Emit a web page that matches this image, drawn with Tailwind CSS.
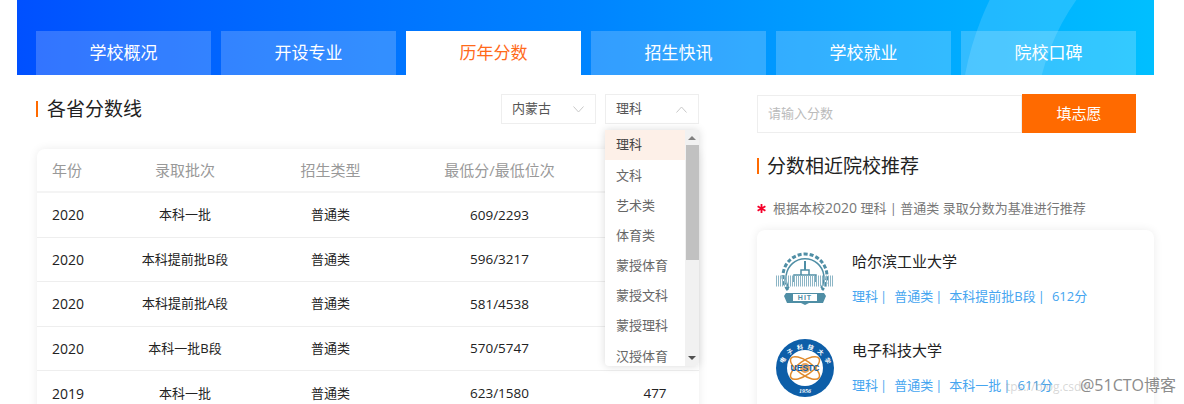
<!DOCTYPE html>
<html lang="zh-CN">
<head>
    <meta charset="UTF-8">
    <title>历年分数</title>
    <script src="https://cdn.jsdelivr.net/npm/@tailwindcss/browser@4"></script>
</head>
<body class="bg-white h-[404px] overflow-hidden relative font-['Open_Sans','Noto_Sans_CJK_SC',sans-serif] text-[#222]">
    <!-- tab header -->
    <header class="relative ml-[17px] w-[1137px] h-[75px] overflow-hidden bg-gradient-to-r from-[#0050ff] via-[#0084ff] to-[#00bfff]">
        <div class="absolute left-[943px] top-[-170px] w-[600px] h-[600px] rounded-full border-[75px] border-white/[0.13]"></div>
        <nav class="relative flex gap-[10px] pl-[19px] pt-[31px]">
            <a class="w-[175px] h-[44px] bg-white/20 text-white text-[17px] flex items-center justify-center">学校概况</a>
            <a class="w-[175px] h-[44px] bg-white/20 text-white text-[17px] flex items-center justify-center">开设专业</a>
            <a class="w-[175px] h-[44px] bg-white text-[#ff6a1a] text-[17px] flex items-center justify-center">历年分数</a>
            <a class="w-[175px] h-[44px] bg-white/20 text-white text-[17px] flex items-center justify-center">招生快讯</a>
            <a class="w-[175px] h-[44px] bg-white/20 text-white text-[17px] flex items-center justify-center">学校就业</a>
            <a class="w-[175px] h-[44px] bg-white/20 text-white text-[17px] flex items-center justify-center">院校口碑</a>
        </nav>
    </header>

    <main class="flex pl-[36px] h-[329px] overflow-hidden">
        <!-- left column -->
        <section class="w-[664px] relative">
            <div class="flex items-center h-[30px] mt-[19px]">
                <span class="w-[2px] h-[16px] bg-[#ff6a00]"></span>
                <h2 class="ml-[9px] text-[19px] leading-none">各省分数线</h2>
                <div class="ml-auto w-[95px] h-[30px] border border-[#eeeeee] flex items-center justify-between pl-[10px] pr-[11px] text-[13px] text-[#555]">
                    内蒙古
                    <svg width="11" height="7" viewBox="0 0 11 7" fill="none" stroke="#c8c8c8"><path d="M.5.5l5 5.5 5-5.5"/></svg>
                </div>
                <div class="ml-[9px] mr-px w-[94px] h-[30px] border border-[#eeeeee] flex items-center justify-between pl-[10px] pr-[11px] text-[13px] text-[#555]">
                    理科
                    <svg width="11" height="7" viewBox="0 0 11 7" fill="none" stroke="#c8c8c8"><path d="M.5 6.5l5-5.5 5 5.5"/></svg>
                </div>
            </div>

            <!-- score table -->
            <div class="ml-px w-[662px] mt-[25px] rounded-t-[8px] bg-white shadow-[0_0_10px_rgba(0,0,0,0.08)] text-center">
                <div class="grid grid-cols-[60px_176px_115px_223px_88px] h-[44px] pt-[1px] items-center text-[15px] text-[#999] border-b-2 border-[#f4f4f4]">
                    <span class="pl-[15px] text-left whitespace-nowrap">年份</span><span>录取批次</span><span class="whitespace-nowrap">招生类型</span><span>最低分/最低位次</span><span></span>
                </div>
                <div class="grid grid-cols-[60px_176px_115px_223px_88px] h-[44.5px] items-center text-[13px] border-b border-[#eeeeee]">
                    <span class="pl-[15px] text-left text-[14px]">2020</span><span>本科一批</span><span class="whitespace-nowrap">普通类</span><span class="text-[13.5px]">609/2293</span><span></span>
                </div>
                <div class="grid grid-cols-[60px_176px_115px_223px_88px] h-[44.5px] items-center text-[13px] border-b border-[#eeeeee]">
                    <span class="pl-[15px] text-left text-[14px]">2020</span><span>本科提前批B段</span><span class="whitespace-nowrap">普通类</span><span class="text-[13.5px]">596/3217</span><span></span>
                </div>
                <div class="grid grid-cols-[60px_176px_115px_223px_88px] h-[44.5px] items-center text-[13px] border-b border-[#eeeeee]">
                    <span class="pl-[15px] text-left text-[14px]">2020</span><span>本科提前批A段</span><span class="whitespace-nowrap">普通类</span><span class="text-[13.5px]">581/4538</span><span></span>
                </div>
                <div class="grid grid-cols-[60px_176px_115px_223px_88px] h-[44.5px] items-center text-[13px] border-b border-[#eeeeee]">
                    <span class="pl-[15px] text-left text-[14px]">2020</span><span>本科一批B段</span><span class="whitespace-nowrap">普通类</span><span class="text-[13.5px]">570/5747</span><span></span>
                </div>
                <div class="grid grid-cols-[60px_176px_115px_223px_88px] h-[44.5px] items-center text-[13px]">
                    <span class="pl-[15px] text-left text-[14px]">2019</span><span>本科一批</span><span class="whitespace-nowrap">普通类</span><span class="text-[13.5px]">623/1580</span><span class="text-[13.5px]">477</span>
                </div>
            </div>

            <!-- open dropdown -->
            <div class="absolute left-[569px] top-[55px] w-[94px] h-[236px] flex bg-white rounded-b-[4px] shadow-[0_0_8px_rgba(0,0,0,0.15)] overflow-hidden text-[13px] text-[#666]">
                <ul class="w-[80px]">
                    <li class="h-[30.2px] pl-[11px] flex items-center bg-[#fdf0e8] text-[#444]">理科</li>
                    <li class="h-[30.2px] pl-[11px] flex items-center">文科</li>
                    <li class="h-[30.2px] pl-[11px] flex items-center">艺术类</li>
                    <li class="h-[30.2px] pl-[11px] flex items-center">体育类</li>
                    <li class="h-[30.2px] pl-[11px] flex items-center">蒙授体育</li>
                    <li class="h-[30.2px] pl-[11px] flex items-center">蒙授文科</li>
                    <li class="h-[30.2px] pl-[11px] flex items-center">蒙授理科</li>
                    <li class="h-[30.2px] pl-[11px] flex items-center">汉授体育</li>
                </ul>
                <div class="w-[14px] bg-[#f1f1f1] flex flex-col items-center">
                    <svg class="mt-[6px]" width="8" height="4" viewBox="0 0 8 4" fill="#808080"><path d="M4 0l4 4H0z"/></svg>
                    <div class="w-[13px] h-[115px] mt-[5px] bg-[#c1c1c1]"></div>
                    <svg class="mt-auto mb-[6px]" width="8" height="4" viewBox="0 0 8 4" fill="#505050"><path d="M0 0h8L4 4z"/></svg>
                </div>
            </div>
        </section>

        <!-- right column -->
        <aside class="ml-[57px] w-[379px]">
            <div class="flex h-[39px] mt-[19px]">
                <div class="flex-1 h-[38px] self-end border border-[#eeeeee] flex items-center pl-[10px] text-[13px] text-[#bbb]">请输入分数</div>
                <button class="w-[114px] bg-[#ff6a00] text-white text-[15px]">填志愿</button>
            </div>
            <div class="flex items-center mt-[21px] h-[24px]">
                <span class="w-[2px] h-[16px] bg-[#ff6a00]"></span>
                <h2 class="ml-[8px] text-[19px] leading-none">分数相近院校推荐</h2>
            </div>
            <p class="flex items-center mt-[20px] h-[20px] text-[13px] text-[#777] whitespace-nowrap">
                <svg class="mr-[7px]" width="9" height="9" viewBox="0 0 9 9" stroke="#f5002a" stroke-width="1.8"><path d="M4.5 0v9M.6 2.2l7.8 4.6M8.4 2.2L.6 6.8"/></svg>
                <span>根据本校<span class="text-[14px]">2020</span> 理科 | 普通类 录取分数为基准进行推荐</span>
            </p>
            <!-- school cards -->
            <div class="mt-[12px] w-[397px] rounded-t-[8px] bg-white shadow-[0_0_10px_rgba(0,0,0,0.08)] h-[200px] pl-[19px] pt-[19px]">
                <div class="flex h-[89px]">
                    <svg class="mt-[3px] shrink-0" width="58" height="53" viewBox="0 0 58 53" fill="none" stroke="#4f8ea5">
                        <path stroke-width="3" stroke-dasharray="4 2" d="M12 38a22 22 0 1 1 34 0"/>
                        <path stroke-width="1.5" d="M13 36a19 19 0 1 1 32 0"/>
                        <path stroke-width="1.5" d="M18 30v-7h22v7M25 23v-5h8v5"/>
                        <path stroke-width="2" d="M29 18V9"/>
                        <path stroke="#8db6c6" stroke-width="11" stroke-dasharray="1 1" d="M0 29h58"/>
                        <path fill="#4f8ea5" stroke="none" d="M10 41h38l2 3-3 7H33l-4 2-4-2H11l-3-7z"/>
                        <rect x="17" y="42" width="24" height="7" fill="#fff" stroke="none"/>
                        <text x="29" y="48" text-anchor="middle" font-size="7" font-weight="700" fill="#4f8ea5" stroke="none" font-family="Liberation Sans" letter-spacing="1">HIT</text>
                    </svg>
                    <div class="ml-[18px]">
                        <h3 class="text-[15px] leading-[24px]">哈尔滨工业大学</h3>
                        <p class="mt-[12px] text-[13px] leading-[22px] text-[#45a5f0] whitespace-nowrap">理科<span class="ml-[2px] mr-[7px]">|</span>普通类<span class="ml-[2px] mr-[7px]">|</span>本科提前批B段<span class="ml-[2px] mr-[7px]">|</span>612分</p>
                    </div>
                </div>
                <div class="flex">
                    <svg class="mt-px shrink-0" width="58" height="58" viewBox="0 0 58 58" fill="none">
                        <defs><path id="ring" d="M6 33a23 23 0 1 1 46 0"/></defs>
                        <circle cx="29" cy="29" r="29" fill="#0d5ea8"/>
                        <circle cx="29" cy="29" r="18" fill="#fff"/>
                        <text font-size="6" font-weight="700" fill="#fff" font-family="Noto Sans CJK SC" letter-spacing="4"><textPath href="#ring" startOffset="8">电子科技大学</textPath></text>
                        <text x="29" y="54" text-anchor="middle" font-size="6" font-style="italic" font-weight="700" fill="#fff" font-family="Liberation Serif">1956</text>
                        <ellipse cx="29" cy="29" rx="17" ry="7" stroke="#e08a2c" stroke-width="1.5" transform="rotate(35 29 29)"/>
                        <ellipse cx="29" cy="29" rx="17" ry="7" stroke="#e08a2c" stroke-width="1.5" transform="rotate(-35 29 29)"/>
                        <circle cx="29" cy="29" r="5" fill="#e9a35c"/>
                        <text x="29" y="32" text-anchor="middle" font-size="8.5" font-weight="700" fill="#0d5ea8" font-family="Liberation Sans">UESTC</text>
                    </svg>
                    <div class="ml-[18px]">
                        <h3 class="text-[15px] leading-[24px]">电子科技大学</h3>
                        <p class="mt-[12px] text-[13px] leading-[22px] text-[#45a5f0] whitespace-nowrap">理科<span class="ml-[2px] mr-[7px]">|</span>普通类<span class="ml-[2px] mr-[7px]">|</span>本科一批<span class="ml-[2px] mr-[7px]">|</span>611分</p>
                    </div>
                </div>
            </div>
        </aside>
    </main>

    <!-- watermark -->
    <div class="absolute right-[8px] bottom-[7px] text-[16px] text-[#8c8c8c]">@51CTO博客</div>
    <div class="absolute left-[1006px] bottom-[8px] text-[12px] text-[#999]/40">tps://blog.csdn</div>
</body>
</html>
